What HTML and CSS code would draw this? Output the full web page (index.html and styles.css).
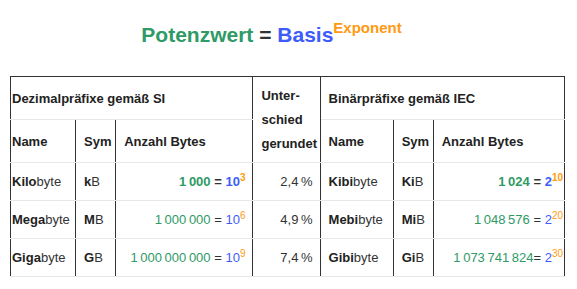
FILE: index.html
```html
<!DOCTYPE html>
<html lang="de">
<head>
    <meta charset="UTF-8">
    <meta name="viewport" content="width=device-width, initial-scale=1.0">
    <title>Potenzwert</title>
    <link rel="stylesheet" href="styles.css">
</head>
<body>
    <h1 class="formula">
        <span class="val">Potenzwert</span> = <span class="base">Basis</span><sup class="exp">Exponent</sup>
    </h1>

    <table class="prefix-table">
        <colgroup>
            <col class="c-name">
            <col class="c-sym">
            <col class="c-bytes">
            <col class="c-diff">
            <col class="c-name2">
            <col class="c-sym">
            <col class="c-bytes2">
        </colgroup>
        <tr class="head">
            <th colspan="3" class="first">Dezimalpräfixe gemäß SI</th>
            <th rowspan="2" class="diff">Unter-<br>schied<br>gerundet</th>
            <th colspan="3" class="last">Binärpräfixe gemäß IEC</th>
        </tr>
        <tr class="head">
            <th class="first">Name</th>
            <th>Sym</th>
            <th>Anzahl Bytes</th>
            <th>Name</th>
            <th>Sym</th>
            <th class="last">Anzahl Bytes</th>
        </tr>
        <tr>
            <td class="first"><b>Kilo</b>byte</td>
            <td><b>k</b>B</td>
            <td class="num strong"><span class="val">1&#8201;000</span> = <span class="base">10</span><sup class="exp">3</sup></td>
            <td class="num">2,4&#8201;%</td>
            <td><b>Kibi</b>byte</td>
            <td><b>Ki</b>B</td>
            <td class="num strong last"><span class="val">1&#8201;024</span> = <span class="base">2</span><sup class="exp">10</sup></td>
        </tr>
        <tr>
            <td class="first"><b>Mega</b>byte</td>
            <td><b>M</b>B</td>
            <td class="num"><span class="val">1&#8201;000&#8201;000</span> = <span class="base">10</span><sup class="exp">6</sup></td>
            <td class="num">4,9&#8201;%</td>
            <td><b>Mebi</b>byte</td>
            <td><b>Mi</b>B</td>
            <td class="num last"><span class="val">1&#8201;048&#8201;576</span> = <span class="base">2</span><sup class="exp">20</sup></td>
        </tr>
        <tr>
            <td class="first"><b>Giga</b>byte</td>
            <td><b>G</b>B</td>
            <td class="num"><span class="val">1&#8201;000&#8201;000&#8201;000</span> = <span class="base">10</span><sup class="exp">9</sup></td>
            <td class="num">7,4&#8201;%</td>
            <td><b>Gibi</b>byte</td>
            <td><b>Gi</b>B</td>
            <td class="num last"><span class="val">1&#8201;073&#8201;741&#8201;824</span>= <span class="base">2</span><sup class="exp">30</sup></td>
        </tr>
    </table>
</body>
</html>
```

FILE: styles.css
```css
html, body {
    margin: 0;
    padding: 0;
}
body {
    font-family: "Liberation Sans", Arial, sans-serif;
    color: #333;
    background: #fff;
}
.val {
    color: #2e9a66;
}
.base {
    color: #3d5cfb;
}
.exp {
    color: #ff9a10;
}
.formula {
    margin: 0;
    padding: 20px 34px 0 0;
    height: 64px;
    box-sizing: border-box;
    text-align: center;
    font-size: 21px;
    line-height: 30px;
    font-weight: bold;
    color: #333;
}
.formula .exp {
    font-size: 15px;
    vertical-align: 9px;
    line-height: 0;
}
.prefix-table {
    margin: 12px 0 0 10px;
    width: 555px;
    border-collapse: collapse;
    table-layout: fixed;
    font-size: 13px;
    line-height: 23px;
    border-top: 1px solid #333;
    border-left: 1px solid #333;
}
.c-name { width: 65px; }
.c-sym { width: 40px; }
.c-bytes { width: 137px; }
.c-diff { width: 67px; }
.c-name2 { width: 73px; }
.c-bytes2 { width: 131px; }
tr {
    height: 38px;
}
tr.head {
    height: 43px;
}
th, td {
    padding: 0 7px 0 8px;
    border-right: 1px solid #333;
    border-bottom: 1px solid #e8e8e8;
    text-align: left;
    vertical-align: middle;
    white-space: nowrap;
}
th {
    color: #222;
    font-weight: bold;
}
.diff {
    line-height: 24px;
}
.first {
    padding-left: 1px;
}
.last {
    padding-right: 1px;
}
.num {
    text-align: right;
}
.strong {
    font-weight: bold;
}
td b {
    color: #222;
}
td .exp {
    font-size: 10px;
    vertical-align: 5px;
    line-height: 0;
}
```
